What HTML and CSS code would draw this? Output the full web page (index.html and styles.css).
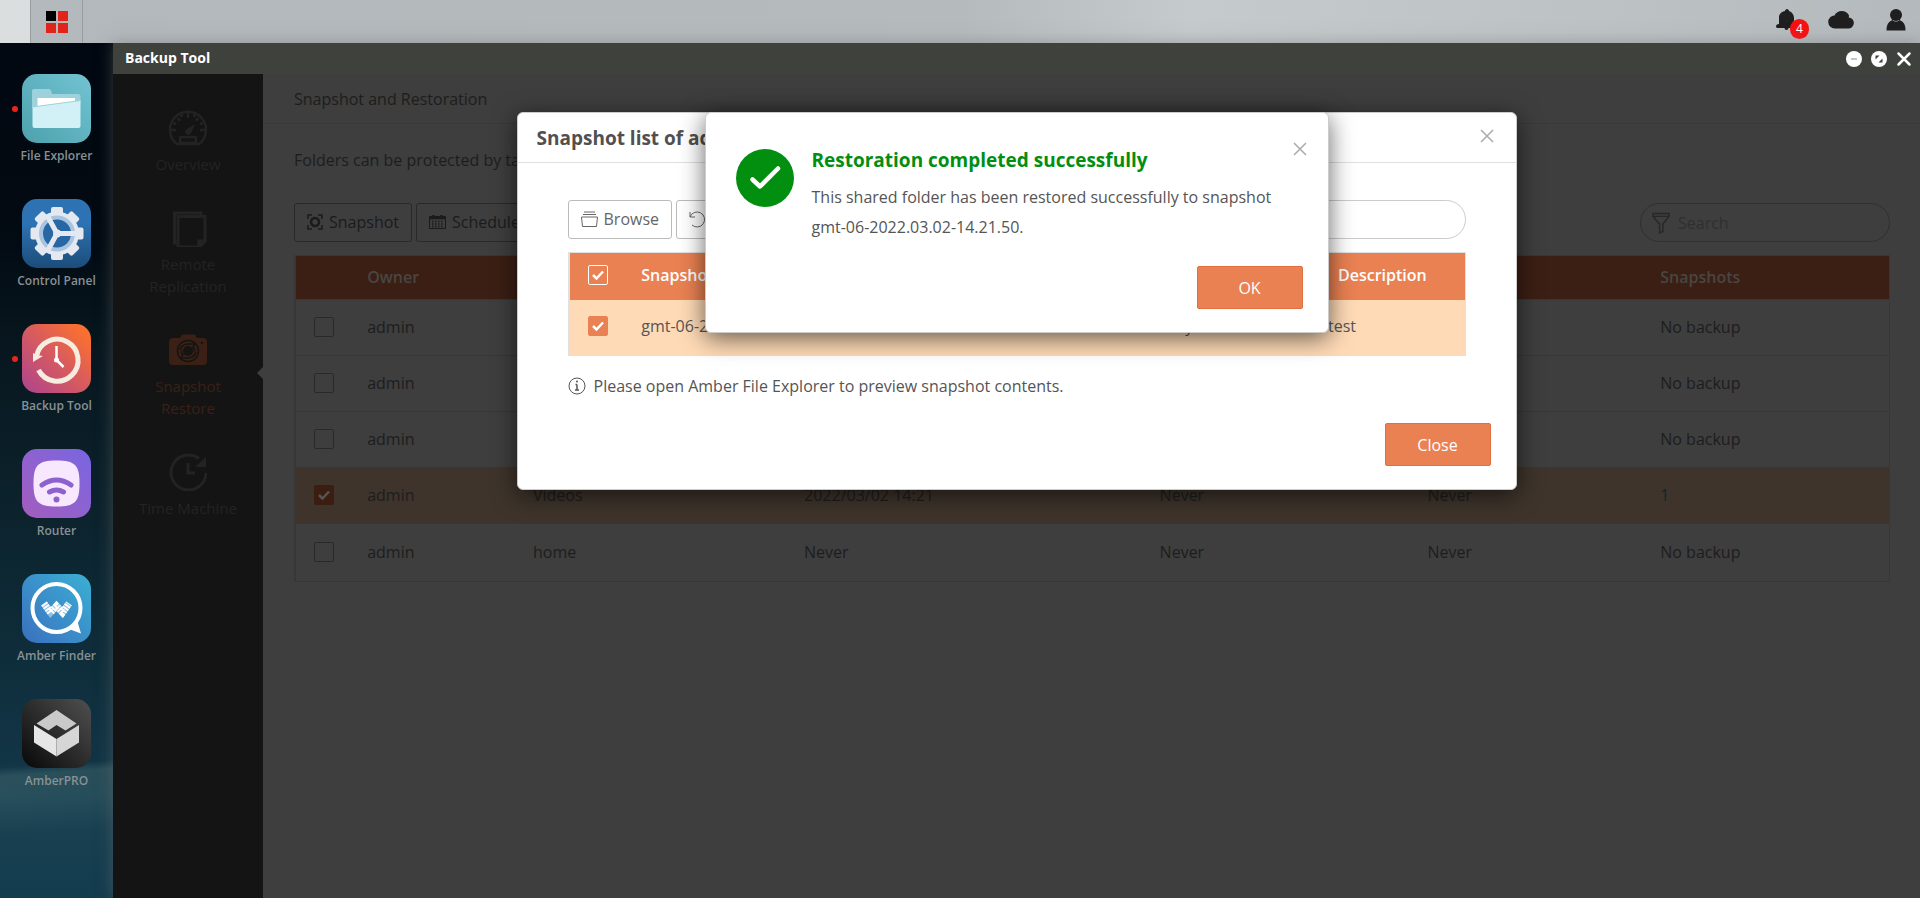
FILE: index.html
```html
<!DOCTYPE html>
<html lang="en">
<head>
    <meta charset="utf-8">
    <title>Backup Tool</title>
    <link rel="stylesheet" href="styles.css">
</head>
<body>

    <header class="topbar">
        <div class="topbar-start"></div>
        <button class="topbar-menu" type="button" aria-label="Main menu">
            <span class="tile dark"></span><span class="tile"></span>
            <span class="tile"></span><span class="tile"></span>
        </button>
        <div class="topbar-icons">
            <button class="icon-btn bell" type="button" aria-label="Notifications">
                <svg width="20" height="22" viewBox="0 0 20 22"><path d="M11 0c1 0 2 1 2 2 3 1 5 4 5 7v5l1.500 2v3H12.500a2 2 0 0 1-4 0H1.500C.500 19 0 18 0 17.500 0 16 1 15 3 15V8c0-3 3-5.500 6-6 0-1 1-2 2-2z"/></svg>
                <span class="badge">4</span>
            </button>
            <button class="icon-btn" type="button" aria-label="Cloud">
                <svg width="26" height="20" viewBox="0 0 26 20"><path d="M7 19.500a6.500 6.500 0 0 1-.500-13A8 8 0 0 1 21 6.500c0 .800 0 1.200-.300 2A5.500 5.500 0 0 1 20 19.500z"/></svg>
            </button>
            <button class="icon-btn" type="button" aria-label="Account">
                <svg width="20" height="22" viewBox="0 0 20 22"><circle cx="10" cy="6" r="6"/><path d="M.500 21.500c0-6 2-9 6-10.500 2 2 5 2 7 0 4 1.500 6 4.500 6 10.500z"/></svg>
            </button>
        </div>
    </header>

    <div class="desktop">
        <nav class="dock">
            <a class="app running" href="#">
                <svg class="app-icon" viewBox="0 0 69 69">
                    <defs><linearGradient id="g1" x1="0" y1="1" x2="1" y2="0"><stop offset="0" stop-color="#4da0ac"/><stop offset="1" stop-color="#72c4d3"/></linearGradient></defs>
                    <rect width="69" height="69" rx="15" fill="url(#g1)"/>
                    <path d="M10 34V17q0-2 2-2h15q2 0 2.500 3l.500 2h26q2.500 0 2.500 2.500V30z" fill="#9dd2dc"/>
                    <path d="M15.500 24H53v8H15.500z" fill="#fff"/>
                    <path d="M10.500 33L58.500 26.500V52q0 2-2 2h-44q-2 0-2-2z" fill="#d2f1f6"/>
                    <path d="M10.500 33L58.500 26.500" stroke="#9bd3dc" fill="none"/>
                </svg>
                <span class="app-name">File Explorer</span>
            </a>
            <a class="app" href="#">
                <svg class="app-icon" viewBox="0 0 69 69">
                    <defs><linearGradient id="g2" x1="0" y1="0" x2="0" y2="1"><stop offset=".35" stop-color="#2d73b3"/><stop offset="1" stop-color="#1c4c7a"/></linearGradient></defs>
                    <rect width="69" height="69" rx="15" fill="url(#g2)"/>
                    <g fill="#e4e9f1">
                        <rect x="29" y="8" width="12" height="53" rx="2"/>
                        <rect x="29" y="8" width="12" height="53" rx="2" transform="rotate(45 35 34.500)"/>
                        <rect x="29" y="8" width="12" height="53" rx="2" transform="rotate(90 35 34.500)"/>
                        <rect x="29" y="8" width="12" height="53" rx="2" transform="rotate(135 35 34.500)"/>
                        <circle cx="35" cy="34.500" r="22"/>
                    </g>
                    <circle cx="35" cy="34.500" r="16" fill="#2767a4" stroke="#a9c4de" stroke-width="4"/>
                    <path d="M35 34.500L26 18M35 34.500H54M35 34.500L26 51" stroke="#e4e9f1" stroke-width="5"/>
                    <circle cx="35" cy="34.500" r="4" fill="#e4e9f1"/>
                </svg>
                <span class="app-name">Control Panel</span>
            </a>
            <a class="app running" href="#">
                <svg class="app-icon" viewBox="0 0 69 69">
                    <defs><linearGradient id="g3" x1="0" y1="1" x2="1" y2="0"><stop offset="0" stop-color="#ad438f"/><stop offset=".55" stop-color="#db5d5a"/><stop offset=".9" stop-color="#fb702f"/></linearGradient></defs>
                    <rect width="69" height="69" rx="15" fill="url(#g3)"/>
                    <path d="M14.500 32A21 21 0 1 1 16.500 46" fill="none" stroke="#f6ece0" stroke-width="5"/>
                    <path d="M11 38V29l4 2 6 1z" fill="#f6ece0"/>
                    <path d="M34.500 22V36L41.500 43" fill="none" stroke="#fff" stroke-width="2.500"/>
                    <circle cx="34.500" cy="36" r="2.500" fill="#fff"/>
                </svg>
                <span class="app-name">Backup Tool</span>
            </a>
            <a class="app" href="#">
                <svg class="app-icon" viewBox="0 0 69 69">
                    <defs><linearGradient id="g4" x1="0" y1="1" x2="1" y2="0"><stop offset="0" stop-color="#a45dbd"/><stop offset="1" stop-color="#7866e2"/></linearGradient></defs>
                    <rect width="69" height="69" rx="15" fill="url(#g4)"/>
                    <path d="M34.500 11.500C53 11.500 57.500 16 57.500 34.500S53 57.500 34.500 57.500 11.500 53 11.500 34.500 16 11.500 34.500 11.500z" fill="#f8e8ff"/>
                    <path d="M20 36Q34.500 26 49 36M27.500 43Q34.500 39 41.500 43" fill="none" stroke="#8e62cd" stroke-width="5" stroke-linecap="round"/>
                    <circle cx="34.500" cy="50.500" r="3" fill="#8e62cd"/>
                </svg>
                <span class="app-name">Router</span>
            </a>
            <a class="app" href="#">
                <svg class="app-icon" viewBox="0 0 69 69">
                    <defs>
                        <linearGradient id="g5" x1="0" y1="1" x2="1" y2="0"><stop offset="0" stop-color="#3a70bf"/><stop offset="1" stop-color="#3bb0d4"/></linearGradient>
                    </defs>
                    <rect width="69" height="69" rx="15" fill="url(#g5)"/>
                    <circle cx="34.500" cy="34" r="24" fill="none" stroke="#fff" stroke-width="4"/>
                    <path d="M47 55L55 46 59 59.500z" fill="#fff"/>
                    <path d="M22 29.500L28.500 38.500 34.500 32 40.500 38.500 47 29.500" fill="none" stroke="#8fc0e4" stroke-width="7"/>
                    <path d="M22 29.500L28.500 38.500 34.500 32 40.500 38.500 47 29.500" fill="none" stroke="#fff" stroke-width="7" stroke-dasharray="2 1"/>
                </svg>
                <span class="app-name">Amber Finder</span>
            </a>
            <a class="app" href="#">
                <svg class="app-icon" viewBox="0 0 69 69">
                    <defs><linearGradient id="g6" x1="0" y1="1" x2="1" y2="0"><stop offset="0" stop-color="#080808"/><stop offset="1" stop-color="#505050"/></linearGradient></defs>
                    <rect width="69" height="69" rx="15" fill="url(#g6)"/>
                    <path d="M34.500 11L54.500 24.500 43.500 31.500 34.500 26 26.500 31.500 14.500 24.500z" fill="#c9c9c9"/>
                    <path d="M12 26L34.500 40V57.500L12 43.500z" fill="#e6e6e6"/>
                    <path d="M57 26L34.500 40V57.500L57 43.500z" fill="#d6d6d6"/>
                </svg>
                <span class="app-name">AmberPRO</span>
            </a>
        </nav>

        <main class="window">
            <div class="titlebar">
                <span>Backup Tool</span>
                <div class="controls">
                    <button type="button" aria-label="Minimize"><svg width="16" height="16" viewBox="0 0 16 16"><circle cx="8" cy="8" r="8" fill="#fff"/><path d="M5 8h6" stroke="#8a8a8a"/></svg></button>
                    <button type="button" aria-label="Resize"><svg width="16" height="16" viewBox="0 0 16 16"><circle cx="8" cy="8" r="8" fill="#fff"/><path d="M4.500 8.500v-4h4zM11.500 7.500v4h-4z" fill="#3f413d"/></svg></button>
                    <button type="button" aria-label="Close window"><svg width="16" height="16" viewBox="0 0 16 16"><path d="M2.500 2.500l11 11M13.500 2.500l-11 11" stroke="#fff" stroke-width="2.500" stroke-linecap="round"/></svg></button>
                </div>
            </div>

            <div class="window-body">
                <nav class="sidebar">
                    <a href="#">
                        <svg viewBox="0 0 38 38" fill="none" stroke="currentColor" stroke-width="2.500"><path d="M8 35A18 18 0 1 1 30 35z"/><path d="M19 4v5M9 9l2 3M29 9l-2 3M2 21h5M31 21h5M12 5l1 3M26 5l-1 3M4 14l3 1M34 14l-3 1"/><rect x="11" y="28" width="16" height="6" rx="2"/><path d="M26 15l-4 9a3 3 0 1 1-4-4z" fill="currentColor" stroke="none"/></svg>
                        Overview
                    </a>
                    <a href="#">
                        <svg viewBox="0 0 38 38" fill="none" stroke="currentColor" stroke-width="3"><path d="M8 34H5.500V4H32v3" /><path d="M9 7.500H36V32l-6 6H9z"/><path d="M30 38v-6h6z" fill="currentColor"/></svg>
                        Remote Replication
                    </a>
                    <a class="active" href="#">
                        <svg viewBox="0 0 38 38"><path d="M4 7h7l2-3.500h13L28 7h6q4 0 4 4v19q0 4-4 4H4q-4 0-4-4V11q0-4 4-4z" fill="currentColor"/><circle cx="19" cy="20" r="10.500" fill="none" stroke="#141414" stroke-width="1.500"/><path d="M11 19q2-6 8-6h7l-2 3.500q2 1 1.500 4M27 21q-2 6-8 6h-7l2-3.500q-2-1-1.500-4" fill="none" stroke="#141414" stroke-width="1.500"/><circle cx="19" cy="20" r="5" fill="#141414"/><circle cx="33" cy="12" r="1.300" fill="#141414"/></svg>
                        Snapshot Restore
                    </a>
                    <a href="#">
                        <svg viewBox="0 0 38 38" fill="none" stroke="currentColor" stroke-width="3"><path d="M37 20A17.500 17.500 0 1 1 30 5.500"/><path d="M37 4v10H26z" fill="currentColor" stroke="none"/><path d="M19 10v10h7"/></svg>
                        Time Machine
                    </a>
                </nav>

                <section class="content">
                    <h1>Snapshot and Restoration</h1>
                    <div class="content-inner">
                        <p>Folders can be protected by taking snapshots.</p>
                        <div class="toolbar">
                            <button class="tool" type="button">
                                <svg width="16" height="16" viewBox="0 0 16 16" fill="none" stroke="currentColor" stroke-width="1.500"><path d="M1 5V1h4M11 1h4v4M15 11v4h-4M5 15H1v-4"/><circle cx="8" cy="8" r="4" stroke-width="2.500"/></svg>
                                Snapshot
                            </button>
                            <button class="tool" type="button">
                                <svg width="17" height="14" viewBox="0 0 17 14" fill="none" stroke="currentColor"><path d="M.500 1.500h16v12H.500z"/><path d="M1 3h15M4.500 0v3M12.500 0v3" stroke-width="2.500"/><path d="M3 6.500h11M3 9h11M3 11.500h11" stroke-dasharray="1.500 1.500" stroke-width="1.500"/></svg>
                                Schedule
                            </button>
                            <label class="search">
                                <svg width="18" height="22" viewBox="0 0 19 22" fill="none" stroke="currentColor" stroke-width="1.500"><path d="M1 1h17v3l-6.500 8v8L8 21.500V12L1 4zM1 4h17"/></svg>
                                <input type="text" placeholder="Search" aria-label="Search folders">
                            </label>
                        </div>

                        <table class="folders">
                            <thead>
                                <tr>
                                    <th class="c-check"></th>
                                    <th class="c-owner">Owner</th>
                                    <th class="c-folder">Folder</th>
                                    <th class="c-last">Last</th>
                                    <th class="c-next">Next</th>
                                    <th class="c-restore">Restored</th>
                                    <th>Snapshots</th>
                                </tr>
                            </thead>
                            <tbody>
                                <tr>
                                    <td><input type="checkbox" aria-label="Select Documents"></td>
                                    <td>admin</td><td>Documents</td><td>Never</td><td>Never</td><td>Never</td><td>No backup</td>
                                </tr>
                                <tr>
                                    <td><input type="checkbox" aria-label="Select Music"></td>
                                    <td>admin</td><td>Music</td><td>Never</td><td>Never</td><td>Never</td><td>No backup</td>
                                </tr>
                                <tr>
                                    <td><input type="checkbox" aria-label="Select Photos"></td>
                                    <td>admin</td><td>Photos</td><td>Never</td><td>Never</td><td>Never</td><td>No backup</td>
                                </tr>
                                <tr class="selected">
                                    <td><input type="checkbox" aria-label="Select Videos" checked></td>
                                    <td>admin</td><td>Videos</td><td>2022/03/02 14:21</td><td>Never</td><td>Never</td><td><a href="#">1</a></td>
                                </tr>
                                <tr>
                                    <td><input type="checkbox" aria-label="Select home"></td>
                                    <td>admin</td><td>home</td><td>Never</td><td>Never</td><td>Never</td><td>No backup</td>
                                </tr>
                            </tbody>
                        </table>
                    </div>
                </section>
            </div>

            <div class="overlay">
                <div class="modal" role="dialog" aria-labelledby="list-title">
                    <div class="modal-header">
                        <h2 id="list-title">Snapshot list of admin/Videos</h2>
                        <button class="close" type="button" aria-label="Close">
                            <svg width="14" height="14" viewBox="0 0 14 14"><path d="M1 1l12 12M13 1L1 13"/></svg>
                        </button>
                    </div>
                    <div class="modal-body">
                        <div class="toolbar">
                            <button class="tool" type="button">
                                <svg width="17" height="16" viewBox="0 0 17 16" fill="none" stroke="currentColor"><path d="M3 1h11M2 3.500h13M.500 6h16l-1 9.500h-14z"/></svg>
                                Browse
                            </button>
                            <button class="tool" type="button">
                                <svg width="17" height="17" viewBox="0 0 17 17" fill="none" stroke="currentColor"><path d="M1 1v5h5M1 6A7.500 7.500 0 1 1 3 14"/></svg>
                                Restore
                            </button>
                            <label class="search"><input type="text" aria-label="Search snapshots"></label>
                        </div>
                        <table class="snapshots">
                            <thead>
                                <tr>
                                    <th class="s-check"><input type="checkbox" aria-label="Select all" checked></th>
                                    <th class="s-name">Snapshot</th>
                                    <th class="s-type">Type</th>
                                    <th class="s-desc">Description</th>
                                </tr>
                            </thead>
                            <tbody>
                                <tr>
                                    <td><input type="checkbox" aria-label="Select snapshot" checked></td>
                                    <td>gmt-06-2022.03.02-14.21.50</td>
                                    <td>Manually</td>
                                    <td>test</td>
                                </tr>
                            </tbody>
                        </table>
                        <p class="hint">
                            <svg width="18" height="18" viewBox="0 0 18 18" fill="none" stroke="currentColor"><circle cx="9" cy="9" r="8"/><path d="M9 7.500v5.500M7.500 7.500H9M7 13h4" stroke-width="1.500"/><circle cx="9" cy="4.500" r="1" fill="currentColor" stroke="none"/></svg>
                            Please open Amber File Explorer to preview snapshot contents.
                        </p>
                    </div>
                    <div class="modal-footer"><button class="primary" type="button">Close</button></div>
                </div>

                <div class="alert" role="alertdialog" aria-labelledby="alert-title">
                    <svg class="alert-icon" width="58" height="58" viewBox="0 0 58 58"><circle cx="29" cy="29" r="29" fill="#028f10"/><path d="M16.500 30.500l7.500 7L42 19.500" fill="none" stroke="#fff" stroke-width="4.500" stroke-linecap="round" stroke-linejoin="round"/></svg>
                    <div class="alert-text">
                        <h2 id="alert-title">Restoration completed successfully</h2>
                        <p>This shared folder has been restored successfully to snapshot gmt-06-2022.03.02-14.21.50.</p>
                    </div>
                    <button class="close" type="button" aria-label="Dismiss">
                        <svg width="14" height="14" viewBox="0 0 14 14"><path d="M1 1l12 12M13 1L1 13"/></svg>
                    </button>
                    <button class="primary" type="button">OK</button>
                </div>
            </div>
        </main>
    </div>

</body>
</html>
```
FILE: styles.css
```css
* {
    box-sizing: border-box;
}
body {
    margin: 0;
    height: 100vh;
    display: flex;
    flex-direction: column;
    overflow: hidden;
    font-family: "Open Sans", sans-serif;
    font-size: 16px;
    line-height: 22px;
    color: #555;
}
button,
input {
    font: inherit;
    color: inherit;
}
button {
    cursor: pointer;
}
a {
    text-decoration: none;
}
svg {
    display: block;
    flex-shrink: 0;
}
h1,
h2,
p {
    margin: 0;
}

/* top bar */
.topbar {
    display: flex;
    height: 43px;
    flex-shrink: 0;
    background: linear-gradient(90deg, #b3b8bc, #b5babd 50%, #c5cacc 62%, #bcc1c4 85%, #b4b9bd);
}
.topbar-start {
    width: 30px;
    background: #dadedf;
}
.topbar-menu {
    width: 53px;
    padding: 11px 15px;
    border: 0;
    border-left: 1px solid #989da0;
    border-right: 1px solid #989da0;
    background: #b4b9bd;
    display: grid;
    grid-template-columns: 10px 10px;
    grid-template-rows: 10px 10px;
    gap: 2px;
}
.tile {
    background: #e2231a;
}
.tile.dark {
    background: #000;
}
.topbar-icons {
    margin-left: auto;
    padding: 9px 14px 0 0;
    display: flex;
    align-items: flex-start;
    gap: 32px;
}
.icon-btn {
    position: relative;
    border: 0;
    padding: 0;
    background: none;
    fill: #1f1f1f;
}
.badge {
    position: absolute;
    left: 14px;
    top: 10px;
    width: 19px;
    height: 20px;
    border-radius: 10px;
    background: #f91111;
    color: #fff;
    font-size: 12px;
    line-height: 20px;
    text-align: center;
}

/* desktop and dock */
.desktop {
    flex: 1;
    min-height: 0;
    display: flex;
    background:
        linear-gradient(176deg, transparent 84%, rgba(90, 130, 130, 0.3) 85%, transparent 92%),
        linear-gradient(#020811, #020a12 22%, #08171f 36%, #0c232d 55%, #0e2c39 70%, #123546 84%, #1b4252 88%, #133c4e);
    background-size: 113px 100%;
    background-repeat: no-repeat;
}
.dock {
    width: 113px;
    padding-top: 31px;
    display: flex;
    flex-direction: column;
    gap: 32px;
    flex-shrink: 0;
}
.app {
    position: relative;
    display: flex;
    flex-direction: column;
    align-items: center;
    gap: 2px;
    color: #879194;
    font-size: 12px;
    font-weight: 600;
    line-height: 22px;
    white-space: nowrap;
}
.app-icon {
    width: 69px;
    height: 69px;
}
.running::before {
    content: "";
    position: absolute;
    left: 12px;
    top: 32px;
    width: 6px;
    height: 6px;
    border-radius: 3px;
    background: #e8241c;
}

/* window */
.window {
    position: relative;
    flex: 1;
    min-width: 0;
    display: flex;
    flex-direction: column;
    background: #3e3e3e;
    box-shadow: 0 0 14px rgba(110, 110, 110, 0.5);
}
.titlebar {
    height: 31px;
    flex-shrink: 0;
    padding: 0 8px 0 12px;
    display: flex;
    justify-content: space-between;
    background: #3f413d;
    color: #fff;
    font-size: 14px;
    font-weight: 700;
    line-height: 30px;
}
.controls {
    display: flex;
    gap: 9px;
    padding-top: 8px;
}
.controls button {
    height: 16px;
    border: 0;
    padding: 0;
    background: none;
}
.window-body {
    flex: 1;
    min-height: 0;
    display: flex;
}
.sidebar {
    width: 150px;
    flex-shrink: 0;
    padding: 35px 10px 0;
    display: flex;
    flex-direction: column;
    gap: 34px;
    background: #141414;
    font-size: 15px;
}
.sidebar a {
    position: relative;
    display: flex;
    flex-direction: column;
    align-items: center;
    gap: 6px;
    padding: 0 20px;
    color: #232323;
    text-align: center;
}
.sidebar a:last-child {
    padding: 0;
}
.sidebar svg {
    width: 38px;
    height: 38px;
}
.sidebar .active {
    color: #3b2015;
}
.sidebar .active::after {
    content: "";
    position: absolute;
    right: -10px;
    top: 36px;
    border: 6px solid transparent;
    border-left: 0;
    border-right-color: #3e3e3e;
}
.content {
    flex: 1;
    min-width: 0;
    color: #1d1d1d;
}
.content h1 {
    padding: 14px 31px 13px;
    border-bottom: 1px solid #393939;
    font-size: 16px;
    font-weight: 400;
}
.content-inner {
    padding: 25px 30px 0 31px;
}
.content .toolbar {
    margin-top: 32px;
}
.toolbar {
    display: flex;
    gap: 4px;
}
.tool {
    height: 39px;
    display: flex;
    align-items: center;
    gap: 6px;
    padding: 0 12px 1px;
    border: 1px solid #bbb;
    border-radius: 3px;
    background: #fff;
    color: #666;
}
.content .tool {
    border-color: #292929;
    background: none;
    color: #1b1b1b;
}
.search {
    margin-left: auto;
    width: 250px;
    height: 39px;
    padding: 0 11px;
    display: flex;
    align-items: center;
    gap: 8px;
    border: 1px solid #ccc;
    border-radius: 20px;
}
.search input {
    flex: 1;
    min-width: 0;
    padding: 0;
    border: 0;
    outline: 0;
    background: none;
}
.content .search {
    border-color: #303030;
    color: #272727;
}
.search input::placeholder {
    color: #2f2f2f;
}

/* tables */
table {
    width: 100%;
    margin-top: 13px;
    border-collapse: collapse;
    table-layout: fixed;
}
th,
td {
    padding: 0 10px 2px;
    text-align: left;
    white-space: nowrap;
}
th {
    font-weight: 600;
}
.folders {
    border: 1px solid #373737;
    border-left-width: 2px;
}
.folders th {
    height: 44px;
    background: #3b1f14;
    color: #4a4542;
}
.folders td {
    height: 56px;
    border-top: 1px solid #373737;
}
.folders tr:last-child td {
    height: 58px;
}
.folders .selected {
    background: #3e342b;
}
.folders .selected a {
    color: #10262f;
}
.c-check {
    width: 3.9%;
}
.c-owner {
    width: 10.4%;
}
.c-folder {
    width: 17%;
}
.c-last {
    width: 22.3%;
}
.c-next {
    width: 16.8%;
}
.c-restore {
    width: 14.6%;
}
input[type="checkbox"] {
    appearance: none;
    display: block;
    width: 20px;
    height: 20px;
    margin: 0 0 0 8px;
    border: 1px solid #292929;
    border-radius: 2px;
    background: center / 18px 18px no-repeat;
}
input[type="checkbox"]:checked {
    border-color: #e98152;
    background-color: #e98152;
    background-image: url("data:image/svg+xml,%3Csvg xmlns='http://www.w3.org/2000/svg' viewBox='0 0 18 18'%3E%3Cpath d='M4 9l3.500 3.500L14 5.500' fill='none' stroke='%23fff' stroke-width='2.500'/%3E%3C/svg%3E");
}
.folders input[type="checkbox"]:checked {
    border-color: #3b1d12;
    background-color: #3b1d12;
    background-image: url("data:image/svg+xml,%3Csvg xmlns='http://www.w3.org/2000/svg' viewBox='0 0 18 18'%3E%3Cpath d='M4 9l3.500 3.500L14 5.500' fill='none' stroke='%23555' stroke-width='2.500'/%3E%3C/svg%3E");
}
.snapshots {
    border: 1px solid #e0e0e0;
    border-left-width: 2px;
}
.snapshots th {
    height: 47px;
    background: #e98152;
    color: #fff;
}
.snapshots td {
    height: 56px;
    background: #fedab6;
}
.snapshots th input[type="checkbox"] {
    border-color: #fff;
}
.s-check {
    width: 7%;
}
.s-name {
    width: 54%;
}
.s-type {
    width: 22.6%;
}
.snapshots .s-desc {
    padding-left: 20px;
}

/* dialogs share one grid cell so the alert lies over the list */
.overlay {
    position: absolute;
    inset: 0;
    padding-top: 69px;
    display: grid;
    justify-items: center;
    align-items: start;
}
.modal,
.alert {
    grid-area: 1 / 1;
    border: 1px solid #ccc;
    border-radius: 6px;
    background: #fff;
    box-shadow: 0 5px 24px rgba(0, 0, 0, 0.6);
}
.modal {
    width: 1000px;
    max-width: 100%;
}
.modal-header {
    height: 50px;
    padding: 0 22px 0 19px;
    display: flex;
    align-items: center;
    justify-content: space-between;
    border-bottom: 1px solid #e0e0e0;
}
h2 {
    font-size: 19px;
    font-weight: 700;
    line-height: 26px;
}
.modal h2 {
    color: #505050;
}
.close {
    padding: 0 0 4px;
    border: 0;
    background: none;
}
.close path {
    stroke: #aaa;
    stroke-width: 1.5;
}
.modal-body {
    padding: 37px 50px 0;
}
.hint {
    margin-top: 19px;
    display: flex;
    align-items: center;
    gap: 8px;
}
.modal-footer {
    padding: 26px 25px 23px;
    text-align: right;
}
.primary {
    width: 106px;
    height: 43px;
    border: 1px solid #e3703c;
    border-radius: 2px;
    background: #e98152;
    color: #fff;
}
.alert {
    width: 624px;
    max-width: 100%;
    padding: 32px 25px 23px 30px;
    display: grid;
    grid-template-columns: auto 1fr auto;
    column-gap: 18px;
    align-items: start;
}
.alert-icon {
    margin-top: 4px;
}
.alert-text h2 {
    margin: 2px 0 9px;
    color: #028f10;
}
.alert-text p {
    margin-right: -18px;
    line-height: 30px;
}
.alert .close {
    margin: -3px -4px 0 0;
}
.alert .primary {
    grid-column: 2 / 4;
    justify-self: end;
    margin-top: 24px;
}
```
